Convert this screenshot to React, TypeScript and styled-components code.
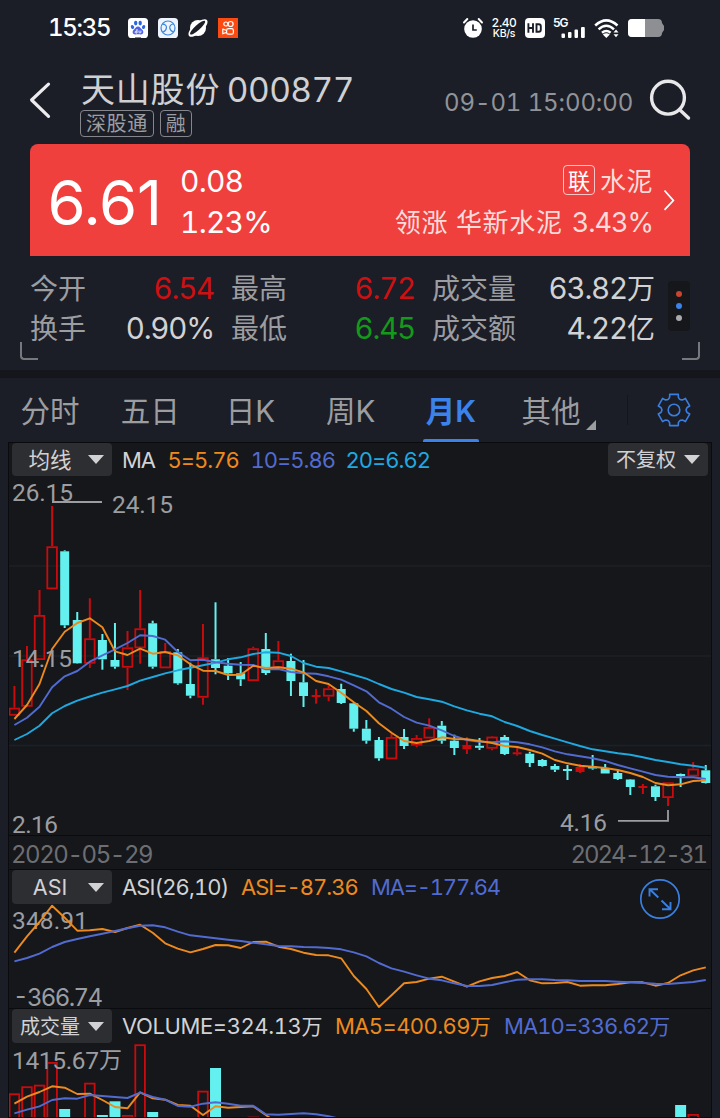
import React from "react";
import styled, { createGlobalStyle } from "styled-components";

const C = {
  page: "#1b1e27",
  panel: "#15171b",
  line: "#0a0b0e",
  up: "#c90b0e",
  down: "#63f0ee",
  orange: "#ee8a1d",
  indigo: "#526bd0",
  sky: "#1fa9e0",
  blue: "#3a7fe0",
  text: "#d2d2d4",
  muted: "#9c9da1",
  dim: "#6d6e72",
};

const FONT = 'Inter, "Noto Sans CJK SC", sans-serif';
const AXIS_FONT = 'Roboto, "Noto Sans CJK SC", sans-serif';

const Global = createGlobalStyle`
  * { box-sizing: border-box; }
  body { margin: 0; background: ${C.page}; font-family: ${FONT}; font-variant-numeric: tabular-nums; overflow: hidden; }
  svg { display: block; flex: none; overflow: visible; }
`;

const Screen = styled.div`
  width: 720px;
  height: 1118px;
  overflow: hidden;
  display: flex;
  flex-direction: column;
  background: ${C.page};
  color: ${C.text};
  white-space: nowrap;
`;

const Cjk = styled.span<{ $size: number; $gap?: number }>`
  font-size: ${(p) => p.$size}px;
  letter-spacing: ${(p) => p.$gap ?? 0}px;
`;

/* ---------- status bar ---------- */

const StatusBar = styled.div`
  height: 56px;
  flex: none;
  display: flex;
  align-items: center;
  padding: 0 56px 0 48px;
  justify-content: space-between;
`;
const StatusGroup = styled.div<{ $gap: number }>`
  display: flex;
  align-items: center;
  gap: ${(p) => p.$gap}px;
`;
const Clock = styled.span`
  font-size: 24px;
  font-weight: 500;
  color: #fff;
  letter-spacing: -1.3px;
  width: 70px;
  line-height: 32px;
`;
const NetSpeed = styled.div`
  display: flex;
  flex-direction: column;
  align-items: center;
  color: #fff;
  font-weight: 500;
  font-size: 12px;
  line-height: 11px;
  letter-spacing: -0.4px;
  width: 26px;
`;
const SpeedUnit = styled.span`
  font-size: 10.5px;
  letter-spacing: -0.3px;
`;

/* ---------- header ---------- */

const Header = styled.header`
  height: 88px;
  flex: none;
  display: flex;
  padding: 0 29px 0 29px;
`;
const BackSlot = styled.div`
  width: 51px;
  padding-top: 25px;
`;
const Identity = styled.div`
  flex: 1;
  display: flex;
  flex-direction: column;
`;
const TitleRow = styled.div`
  height: 54px;
  padding: 13px 0 0 1px;
  line-height: 41px;
  font-size: 33.5px;
  color: #d0d0d2;
`;
const StockCode = styled.span`
  margin-left: 6.5px;
  letter-spacing: -0.5px;
`;
const TagRow = styled.div`
  display: flex;
  gap: 6px;
`;
const Tag = styled.span`
  height: 27px;
  padding: 0 5px;
  border: 1px solid #85868b;
  border-radius: 4px;
  color: ${C.muted};
  font-size: 20px;
  line-height: 27px;
  letter-spacing: 0.6px;
`;
const DateTime = styled.span`
  width: 205px;
  padding-top: 32px;
  font-size: 24px;
  line-height: 30px;
  letter-spacing: -0.1px;
  color: #929398;
`;
const SearchSlot = styled.div`
  padding-top: 23px;
`;

/* ---------- quote card ---------- */

const Card = styled.section`
  margin: 0 30px;
  height: 112px;
  flex: none;
  display: flex;
  background: #ef403e;
  border-radius: 8px 8px 0 0;
  color: #fff;
`;
const Price = styled.div`
  width: 150px;
  padding: 23px 0 0 17.5px;
  font-size: 61.5px;
  line-height: 72px;
  letter-spacing: -0.3px;
  font-variant-numeric: proportional-nums;
`;
const Change = styled.div`
  flex: 1;
  padding-top: 17px;
  font-size: 30px;
  line-height: 41px;
  letter-spacing: -0.8px;
`;
const Sector = styled.div`
  display: flex;
  flex-direction: column;
  align-items: flex-end;
  padding-top: 17px;
  color: #fcdcdb;
`;
const SectorLine = styled.div<{ $gap: number }>`
  height: 41px;
  line-height: 41px;
  display: flex;
  align-items: center;
  gap: ${(p) => p.$gap}px;
`;
const SectorGain = styled.span`
  font-size: 27px;
  letter-spacing: -1px;
`;
const Badge = styled.span`
  width: 32px;
  height: 30px;
  margin-bottom: 3px;
  border: 1px solid #fbc6c5;
  border-radius: 4px;
  text-align: center;
  line-height: 30px;
  font-size: 22px;
  color: #fff;
`;
const ChevronSlot = styled.div`
  width: 37px;
  padding: 45px 0 0 9px;
`;

/* ---------- stats ---------- */

const Stats = styled.section`
  position: relative;
  height: 114px;
  flex: none;
  display: flex;
  padding: 12px 30px 0 30px;
  justify-content: space-between;
`;
const StatGrid = styled.div`
  display: grid;
  grid-template-columns: 56px 128px 73px 128px 101px 139px;
  grid-auto-rows: 40px;
  line-height: 42px;
`;
const StatLabel = styled.span<{ $indent?: number }>`
  font-size: 28px;
  color: ${C.muted};
  padding-left: ${(p) => p.$indent ?? 0}px;
`;
const StatValue = styled.span<{ $color?: string }>`
  font-size: 29.5px;
  line-height: 41px;
  text-align: right;
  letter-spacing: -1.2px;
  color: ${(p) => p.$color ?? C.text};
`;
const DotMenu = styled.div`
  width: 22px;
  height: 50px;
  margin-top: 13px;
  border-radius: 4px;
  background: #15171b;
  display: flex;
  flex-direction: column;
  align-items: center;
  justify-content: center;
  gap: 6px;
`;
const Dot = styled.i<{ $color: string }>`
  width: 6px;
  height: 6px;
  border-radius: 50%;
  background: ${(p) => p.$color};
`;
const Corner = styled.i<{ $side: "left" | "right" }>`
  position: absolute;
  bottom: 10px;
  ${(p) => p.$side}: 20px;
  width: 18px;
  height: 18px;
  border: 0 solid #77787d;
  border-bottom-width: 2px;
  border-${(p) => p.$side}-width: 2px;
  border-bottom-${(p) => p.$side}-radius: 4px;
`;
const Divider = styled.div`
  height: 8px;
  flex: none;
  background: #15161b;
`;

/* ---------- tabs ---------- */

const Tabs = styled.nav`
  height: 64px;
  flex: none;
  display: flex;
`;
const Tab = styled.div<{ $active?: boolean }>`
  width: 100.2px;
  height: 64px;
  display: flex;
  flex-direction: column;
  align-items: center;
  font-size: 29.5px;
  line-height: 66px;
  font-weight: ${(p) => (p.$active ? 600 : 400)};
  color: ${(p) => (p.$active ? "#3b82ea" : C.muted)};
`;
const TabText = styled.span`
  height: 61px;
  display: block;
`;
const Underline = styled.i`
  width: 56px;
  height: 3px;
  border-radius: 2px 2px 0 0;
  background: #3b82ea;
`;
const MoreMark = styled.i`
  width: 0;
  height: 0;
  margin: 42px 0 0 -15px;
  border-bottom: 10px solid ${C.muted};
  border-left: 10px solid transparent;
`;
const TabRule = styled.i`
  width: 1px;
  height: 30px;
  margin: 17px 29px 0 30.8px;
  background: #14161c;
`;
const GearSlot = styled.div`
  padding-top: 15px;
`;

/* ---------- chart panels ---------- */

const Panels = styled.main`
  margin: 0 8px;
  flex: 1;
  border: 1px solid ${C.line};
  background: ${C.panel};
  display: flex;
  flex-direction: column;
  overflow: hidden;
`;
const Panel = styled.section<{ $height: number }>`
  position: relative;
  height: ${(p) => p.$height}px;
  flex: none;
  border-bottom: 1px solid ${C.line};
`;
const PanelHead = styled.div<{ $height?: number }>`
  height: ${(p) => p.$height ?? 34}px;
  flex: none;
  padding: 0 3px;
  display: flex;
`;
const Picker = styled.div`
  width: 100px;
  height: 100%;
  flex: none;
  display: flex;
  align-items: center;
  border-radius: 4px;
  background: #2d2e32;
`;
const PickerText = styled.span`
  width: 76px;
  text-align: center;
  font-size: 21.5px;
  line-height: 34px;
`;
const Caret = styled.i`
  width: 0;
  height: 0;
  border: 8px solid transparent;
  border-top: 9px solid ${C.text};
  border-bottom: 0;
`;
const Legend = styled.div`
  flex: 1;
  display: flex;
  padding-left: 10px;
  font-size: 22px;
  line-height: 34px;
`;
const LegendItem = styled.span<{ $w: number; $color?: string; $ls?: number }>`
  width: ${(p) => p.$w}px;
  flex: none;
  letter-spacing: ${(p) => p.$ls ?? -1}px;
  color: ${(p) => p.$color ?? C.text};
`;
const DateRow = styled.div`
  height: 34px;
  flex: none;
  display: flex;
  justify-content: space-between;
  padding: 0 5px 0 2px;
  border-bottom: 1px solid ${C.line};
  color: ${C.dim};
  font-size: 24px;
  line-height: 38px;
`;
const DateLabel = styled.span<{ $ls: number }>`
  letter-spacing: ${(p) => p.$ls}px;
`;
const ExpandButton = styled.div`
  position: absolute;
  top: 8px;
  right: 30px;
`;

/* ---------- data, in chart pixels ---------- */

type Candle = [up: 0 | 1, high: number, top: number, bottom: number, low: number];

const candles: Candle[] = [
  [1, 686, 707.7, 715.7, 715.7], [1, 646, 659.3, 706.7, 706.7], [1, 590, 615, 660, 660],
  [1, 506, 546.3, 589.3, 589.3], [0, 550.3, 551.3, 625.3, 628], [0, 612, 620, 663.3, 663.7],
  [1, 598.3, 638.3, 663.7, 668], [0, 634, 640, 659.3, 669.7], [0, 623, 660, 666.7, 668.7],
  [1, 631, 647.3, 667.7, 690], [1, 590, 628.3, 648.3, 663.7], [0, 620.7, 623.3, 666.7, 668.7],
  [1, 643, 651, 668.3, 668.3], [0, 649, 652.3, 683.3, 684.7], [0, 662.7, 684, 695.7, 698.3],
  [1, 624, 657.3, 697.7, 704.7], [0, 602.3, 659.3, 668, 674.3], [0, 658, 665.7, 673.3, 680],
  [0, 662, 673.3, 679.3, 686], [1, 646.7, 648.3, 681, 681], [0, 633, 649, 673, 675],
  [1, 641, 660.3, 668, 668], [0, 653.7, 661, 681, 696], [0, 660, 682.3, 696, 707],
  [1, 689, 695, 697, 703.7], [1, 685.3, 688.3, 696.6, 701.3], [0, 683.7, 689, 703, 704],
  [0, 702.7, 703.3, 728.7, 731.7], [0, 720, 728.7, 740.7, 743.7], [0, 737, 740, 758.3, 760.7],
  [1, 734, 737, 759.3, 759.3], [0, 729, 737, 746, 749], [1, 735, 738, 745.6, 747.3],
  [1, 718.3, 727, 738.5, 738.5], [0, 721, 725.7, 740.7, 743.7], [0, 734.7, 740.7, 748, 755],
  [1, 737, 745, 749.3, 754], [0, 738, 745.8, 747.8, 750], [1, 736, 736.6, 748.7, 750.3],
  [0, 735, 737, 754, 755], [1, 747, 752.3, 754.3, 755.7], [0, 751.7, 753.7, 763, 767],
  [0, 759, 760, 766, 766.7], [0, 764, 766, 769.7, 772], [0, 765, 769, 771, 780],
  [1, 764, 767, 772, 773], [0, 755, 766.5, 768.5, 769.7], [0, 764, 768, 773.5, 773.5],
  [0, 770.7, 773, 779, 780], [0, 779, 779.5, 787, 795], [1, 784, 786, 788, 794],
  [0, 784.7, 786.3, 797, 801], [1, 782.3, 782.3, 798, 806], [0, 773.5, 774, 776, 787],
  [1, 762, 768.6, 776.5, 776.5], [0, 765, 770.3, 783, 783.5],
];

const ma5 = [719, 705, 684, 649, 631.7, 623, 618.3, 627.3, 651.3, 655, 648.7, 653.7, 652, 655.3, 664.3, 670.7, 671, 675, 674.7, 665.7, 668, 667.3, 668.7, 672.3, 681, 684, 692.7, 702.3, 711, 723.3, 732.7, 741, 743, 741, 737.3, 739, 739.3, 741, 743, 746, 747, 750, 753.7, 760, 763.3, 765.7, 766.7, 768, 770, 773, 777, 783, 785.3, 784.3, 781, 780.3];
const ma10 = [725, 717.7, 706.7, 687.3, 676.3, 671, 661.7, 655.3, 649.3, 643, 635.3, 636, 639.7, 652, 660.3, 659.7, 662.3, 663.7, 664.7, 665, 669.3, 669, 672, 673.3, 673.7, 676.3, 679.7, 685.3, 691.3, 702.3, 708.7, 717, 722.7, 725.7, 730.3, 736, 740, 741.7, 742.3, 741.3, 742.3, 744.3, 747.3, 751.3, 754.3, 756.3, 758.3, 761, 765, 768.3, 771.7, 775, 776.7, 777.3, 777.3, 779];
const ma20 = [740, 734, 725.7, 713.3, 706, 700.7, 696.5, 692.7, 689.3, 686, 680.7, 677, 673.3, 670.3, 667.7, 665.3, 662.7, 659.3, 657.3, 654, 652.3, 652.7, 656, 663, 666.7, 668, 671.3, 675, 678.7, 684, 689, 692.7, 697, 699.3, 701.7, 706.3, 710.3, 713.7, 716.3, 722, 726, 731, 735, 738.7, 742.3, 746, 749.3, 751.3, 753.3, 754.7, 757.3, 760, 762, 764.3, 765.7, 767.7];
const asi = [952.7, 936.3, 922, 905.7, 917.7, 930.7, 930.3, 929, 932, 928, 924.7, 932.7, 943.3, 948.7, 952.3, 949, 945, 945.3, 948, 942, 941.7, 946.7, 949, 952.7, 955, 955.3, 958.3, 976, 989, 1007, 995.3, 983.3, 982, 978.7, 976.7, 981.7, 986.7, 981.3, 978, 976, 972, 980.3, 983.3, 983, 982, 985.7, 985.3, 985.3, 984, 982.3, 982.3, 985.7, 983, 975.3, 970.3, 967.3];
const asiMa = [961.3, 958, 953.7, 947, 942, 939, 936.3, 933.7, 931, 928.3, 925.7, 925.3, 927.3, 931.7, 935.3, 936.7, 938.3, 939.7, 941, 942.7, 944.3, 946, 946.3, 947, 947.3, 948, 949.3, 952.3, 956.3, 963, 968.3, 971.7, 975.3, 978.7, 980.3, 983.3, 986, 986, 985, 982.3, 979.7, 979.3, 979.3, 980, 980.3, 981, 981, 981, 981.7, 982.3, 983, 983.7, 984, 983, 982, 980];
const volMa5 = [1103.7, 1096.7, 1092, 1086.3, 1087.7, 1094, 1093.7, 1100, 1107, 1108.3, 1092.3, 1098.3, 1099.7, 1105, 1105.7, 1115, 1106.3, 1107.7, 1107, 1106.3, 1115, 1124];
const volMa10 = [1113.3, 1109.7, 1106.3, 1100, 1098.3, 1098.7, 1095, 1096, 1097, 1098, 1092.7, 1097, 1099.7, 1106, 1106.7, 1103.7, 1102.3, 1103.7, 1105.7, 1105.7, 1114.3, 1114.7, 1114, 1113.3, 1114.3, 1116.3, 1119];
const volumes: [index: number, up: 0 | 1, top: number][] = [
  [0, 1, 1093.3], [1, 1, 1086.3], [2, 1, 1084.7], [3, 1, 1062], [4, 0, 1109], [6, 1, 1082.7],
  [7, 0, 1115], [8, 0, 1101.3], [9, 1, 1115], [10, 1, 1044.3], [11, 0, 1112], [15, 1, 1090.7],
  [16, 0, 1068], [19, 1, 1116.6], [23, 0, 1117], [53, 0, 1105], [54, 1, 1114],
];

const xAt = (i: number) => 14.4 + i * 12.57;

const Line = ({ data, color }: { data: number[]; color: string }) => (
  <polyline
    fill="none"
    stroke={color}
    strokeWidth={1.9}
    strokeLinejoin="round"
    points={data.map((y, i) => `${xAt(i).toFixed(1)},${y}`).join(" ")}
  />
);

const Label = ({ x, y, w, children, font = AXIS_FONT, size = 24.5 }: { x: number; y: number; w: number; children: string; font?: string; size?: number }) => (
  <text x={x} y={y} fill={C.muted} fontSize={size} fontFamily={font} textLength={w} lengthAdjust="spacing">
    {children}
  </text>
);

const CandleMark = ({ c, i }: { c: Candle; i: number }) => {
  const [up, high, top, bottom, low] = c;
  const x = xAt(i);
  const color = up ? C.up : C.down;
  const hollow = up && bottom - top > 5;
  return (
    <g>
      {high < top && <line x1={x} x2={x} y1={high} y2={top} stroke={color} strokeWidth={2} />}
      {low > bottom && <line x1={x} x2={x} y1={bottom} y2={low} stroke={color} strokeWidth={2} />}
      {hollow ? (
        <rect x={x - 4.8} y={top + 0.9} width={9.6} height={bottom - top - 1.8} fill="none" stroke={color} strokeWidth={1.8} />
      ) : (
        <rect x={x - 4.5} y={top} width={9} height={bottom - top} fill={color} />
      )}
    </g>
  );
};

const PriceChart = () => (
  <svg width="702" height="359" viewBox="9 476 702 359">
    {[566, 656, 745.5].map((y) => (
      <line key={y} x1={9} x2={711} y1={y} y2={y} stroke="#1e2025" strokeWidth={1.5} />
    ))}
    {candles.map((c, i) => (
      <CandleMark key={i} c={c} i={i} />
    ))}
    <Line data={ma20} color={C.sky} />
    <Line data={ma10} color={C.indigo} />
    <Line data={ma5} color={C.orange} />
    <path d="M52 502H102M618 820.8H668V810" fill="none" stroke={C.muted} strokeWidth={1.8} />
    <Label x={12} y={501} w={61}>26.15</Label>
    <Label x={112} y={513} w={61}>24.15</Label>
    <Label x={12} y={667} w={60}>14.15</Label>
    <Label x={12} y={833} w={46}>2.16</Label>
    <Label x={560} y={831} w={47}>4.16</Label>
  </svg>
);

const AsiChart = () => (
  <svg width="702" height="104" viewBox="9 904 702 104">
    <Label x={12} y={929} w={76}>348.91</Label>
    <Label x={13} y={1006} w={90} font={FONT} size={24}>-366.74</Label>
    <Line data={asi} color={C.orange} />
    <Line data={asiMa} color={C.indigo} />
  </svg>
);

const VolumeChart = () => (
  <svg width="702" height="74" viewBox="9 1043 702 74">
    {volumes.map(([i, up, top]) =>
      up ? (
        <rect key={i} x={xAt(i) - 4.8} y={top + 0.9} width={9.6} height={90} fill="none" stroke={C.up} strokeWidth={1.8} />
      ) : (
        <rect key={i} x={xAt(i) - 5.5} y={top} width={11} height={90} fill={C.down} />
      )
    )}
    <Label x={12} y={1069} w={87}>1415.67</Label>
    <text x={99} y={1068} fill={C.muted} fontSize={23} fontFamily={FONT}>万</text>
    <Line data={volMa5} color={C.orange} />
    <Line data={volMa10} color={C.indigo} />
  </svg>
);

/* ---------- icons ---------- */

const gearPath = (() => {
  const pts: string[] = [];
  for (let k = 0; k < 6; k++) {
    for (const [da, r] of [[-27, 12.2], [-19, 13.4], [-15.5, 16.2], [15.5, 16.2], [19, 13.4], [27, 12.2]]) {
      const a = ((k * 60 - 90 + da) * Math.PI) / 180;
      pts.push(`${(17 + r * Math.cos(a)).toFixed(2)} ${(17 + r * Math.sin(a)).toFixed(2)}`);
    }
  }
  return `M${pts.join("L")}Z`;
})();

const GearIcon = () => (
  <svg width="34" height="34" viewBox="0 0 34 34" fill="none" stroke={C.blue} strokeWidth="1.6" strokeLinejoin="round">
    <path d={gearPath} />
    <circle cx="17" cy="17" r="5.8" />
  </svg>
);

const BackIcon = () => (
  <svg width="24" height="38" viewBox="0 0 24 38" fill="none" stroke="#ececee" strokeWidth="3.2" strokeLinecap="round">
    <path d="M19.5 3.2 2.6 19 19.5 35.4" strokeLinejoin="round" />
  </svg>
);

const SearchIcon = () => (
  <svg width="42" height="42" viewBox="0 0 42 42" fill="none" stroke="#e8e8ea" strokeWidth="3.4" strokeLinecap="round">
    <circle cx="19" cy="18.7" r="16.4" />
    <path d="M31 31l8.5 8" />
  </svg>
);

const PawIcon = () => (
  <svg width="20" height="20" viewBox="0 0 20 20">
    <rect width="20" height="20" rx="3.6" fill="#fff" />
    <g fill="#2a66dd">
      <ellipse cx="7.7" cy="5.1" rx="1.7" ry="2.3" />
      <ellipse cx="12.2" cy="5.1" rx="1.7" ry="2.3" />
      <ellipse cx="4.5" cy="9" rx="1.6" ry="2.1" transform="rotate(-20 4.5 9)" />
      <ellipse cx="15.6" cy="9" rx="1.6" ry="2.1" transform="rotate(20 15.6 9)" />
    </g>
    <path d="M10 8.4c2 0 2.4 1.7 4 3.2 2.5 2.2 1.2 5-1.3 4.9-1-.1-1.7-.2-2.7-.2s-1.7.1-2.7.2c-2.5.1-3.8-2.7-1.3-4.9C7.6 10.1 8 8.4 10 8.4z" fill="#5061e8" />
    <path d="M9 11v4H7.6a1.1 1.1 0 1 1 1.4-1.7M11 12.6v1.7c0 .9 1.9.9 1.9 0v-1.7" fill="none" stroke="#fff" strokeWidth=".9" />
    <path d="M7 20h3v-.8H7z" fill="#d33" />
    <path d="M10 20h3v-.8h-3z" fill="#2a66dd" />
  </svg>
);

const RingIcon = () => (
  <svg width="20" height="20" viewBox="0 0 20 20" fill="none" stroke="#3b86dc" strokeWidth="1.2">
    <rect width="20" height="20" rx="3.6" fill="#eef4fd" stroke="none" />
    <circle cx="10" cy="10" r="7" />
    <path d="M4.5 6.2C7.5 6.2 8.8 8 8.4 10.200S6.500 13.600 5 14M15.600 6C12.800 6.200 11.400 8 11.800 10.200S13.800 13.600 15.600 14" />
  </svg>
);

const OrbitIcon = () => (
  <svg width="20" height="20" viewBox="0 0 20 20">
    <circle cx="10" cy="10" r="8" fill="#fff" />
    <ellipse cx="10" cy="10" rx="12" ry="5" transform="rotate(-42 10 10)" fill="#fff" />
    <ellipse cx="9.6" cy="9.6" rx="10" ry="2.5" transform="rotate(-42 9.6 9.6)" fill={C.page} />
  </svg>
);

const CameraIcon = () => (
  <svg width="20" height="20" viewBox="0 0 20 20" fill="none" stroke="#fff" strokeWidth="1.2">
    <rect width="20" height="20" fill="#fb4b12" stroke="none" />
    <circle cx="7.8" cy="6" r="2" />
    <circle cx="12.6" cy="6" r="2.5" />
    <rect x="8.6" y="10.6" width="6.8" height="5.6" rx="1.8" />
    <path d="M8.6 12.4 4.8 11V15.800L8.600 14.400" strokeLinejoin="round" />
  </svg>
);

const AlarmIcon = () => (
  <svg width="20" height="20" viewBox="0 0 20 20">
    <circle cx="10" cy="11" r="8.8" fill="#fff" />
    <path d="M1 4.5 4.3 1M19 4.5 15.7 1" stroke="#fff" strokeWidth="2" strokeLinecap="round" />
    <path d="M10 6.5V12h3.8" fill="none" stroke={C.page} strokeWidth="1.7" />
  </svg>
);

const HdIcon = () => (
  <svg width="20" height="20" viewBox="0 0 20 20" fill="none" stroke={C.page} strokeWidth="1.9">
    <rect width="20" height="20" rx="4" fill="#fff" stroke="none" />
    <path d="M3.4 5.3v9.4M8 5.3v9.4M3.4 10H8M11.5 6.2v7.6h2.3q2 0 2-2V8.2q0-2-2-2z" />
  </svg>
);

const SignalIcon = () => (
  <svg width="33" height="20" viewBox="0 0 33 20" fill="#fff">
    <text x="0" y="9.2" fontSize="12" fontWeight="600" fontFamily={FONT} textLength="15.5">5G</text>
    <rect x="8.5" y="15.5" width="3.5" height="4.5" rx="1" />
    <rect x="15" y="14" width="3.5" height="6" rx="1" />
    <rect x="21.5" y="11.5" width="3.5" height="8.5" rx="1" />
    <rect x="28" y="9" width="3.8" height="11" rx="1" />
  </svg>
);

const WifiIcon = () => (
  <svg width="26" height="20" viewBox="0 0 26 20" fill="none" stroke="#fff" strokeWidth="2.5">
    <path d="M1.2 7.5Q12.3-2.8 23.5 7.5M4.6 11.3q7.7-7 15.4 0M8 14.8q4.3-3.6 8.6 0" />
    <path d="M12.3 20 8.8 16.6q3.5-2.5 7 0z" fill="#fff" stroke="none" />
    <path d="M19.5 14.5 22 11.5l2.5 3zM19.5 16.3 22 19.3l2.5-3z" fill="#fff" stroke="none" />
  </svg>
);

const BatteryIcon = () => (
  <svg width="36" height="18" viewBox="0 0 36 18">
    <path d="M4 0h26q4 0 4 4l2 3v4l-2 3q0 4-4 4H4q-4 0-4-4V4q0-4 4-4z" fill="#8e8f93" />
    <path d="M17 0H4Q0 0 0 4v10q0 4 4 4h13z" fill="#fff" />
  </svg>
);

const ChevronIcon = () => (
  <svg width="14" height="24" viewBox="0 0 14 24" fill="none" stroke="#fff" strokeWidth="1.8">
    <path d="M2.5 1.5 11.3 11.5 2.5 20.8" />
  </svg>
);

const ExpandIcon = () => (
  <svg width="42" height="42" viewBox="0 0 42 42" fill="none" stroke={C.blue} strokeWidth="1.9">
    <circle cx="21" cy="21" r="19.2" strokeWidth="1.7" />
    <path d="M10.5 18.5V11.2H19M11 11.5l8.3 8M31.5 24v7.3H23M22.5 22.5l8.5 8.3" />
  </svg>
);

/* ---------- page ---------- */

export default function App() {
  return (
    <Screen>
      <Global />
      <StatusBar>
        <StatusGroup $gap={10}>
          <Clock>15:35</Clock>
          <PawIcon />
          <RingIcon />
          <OrbitIcon />
          <CameraIcon />
        </StatusGroup>
        <StatusGroup $gap={8}>
          <AlarmIcon />
          <NetSpeed>
            <span>2.40</span>
            <SpeedUnit>KB/s</SpeedUnit>
          </NetSpeed>
          <HdIcon />
          <SignalIcon />
          <WifiIcon />
          <BatteryIcon />
        </StatusGroup>
      </StatusBar>

      <Header>
        <BackSlot>
          <BackIcon />
        </BackSlot>
        <Identity>
          <TitleRow>
            <Cjk $size={34} $gap={0.8}>天山股份</Cjk>
            <StockCode>000877</StockCode>
          </TitleRow>
          <TagRow>
            <Tag>深股通</Tag>
            <Tag>融</Tag>
          </TagRow>
        </Identity>
        <DateTime>09-01 15:00:00</DateTime>
        <SearchSlot>
          <SearchIcon />
        </SearchSlot>
      </Header>

      <Card>
        <Price>6.61</Price>
        <Change>
          <div>0.08</div>
          <div>1.23%</div>
        </Change>
        <Sector>
          <SectorLine $gap={5}>
            <Badge>联</Badge>
            <Cjk $size={26} $gap={0.5}>水泥</Cjk>
          </SectorLine>
          <SectorLine $gap={9}>
            <Cjk $size={26} $gap={0.7}>领涨 华新水泥</Cjk>
            <SectorGain>3.43%</SectorGain>
          </SectorLine>
        </Sector>
        <ChevronSlot>
          <ChevronIcon />
        </ChevronSlot>
      </Card>

      <Stats>
        <StatGrid>
          <StatLabel>今开</StatLabel>
          <StatValue $color="#cf1013">6.54</StatValue>
          <StatLabel $indent={17}>最高</StatLabel>
          <StatValue $color="#cf1013">6.72</StatValue>
          <StatLabel $indent={17}>成交量</StatLabel>
          <StatValue>63.82<Cjk $size={28}>万</Cjk></StatValue>
          <StatLabel>换手</StatLabel>
          <StatValue>0.90%</StatValue>
          <StatLabel $indent={17}>最低</StatLabel>
          <StatValue $color="#149a1b">6.45</StatValue>
          <StatLabel $indent={17}>成交额</StatLabel>
          <StatValue>4.22<Cjk $size={28}>亿</Cjk></StatValue>
        </StatGrid>
        <DotMenu>
          <Dot $color="#c8452f" />
          <Dot $color="#3b82ea" />
          <Dot $color="#a9aaad" />
        </DotMenu>
        <Corner $side="left" />
        <Corner $side="right" />
      </Stats>
      <Divider />

      <Tabs>
        <Tab><TabText>分时</TabText></Tab>
        <Tab><TabText>五日</TabText></Tab>
        <Tab><TabText>日K</TabText></Tab>
        <Tab><TabText>周K</TabText></Tab>
        <Tab $active>
          <TabText>月K</TabText>
          <Underline />
        </Tab>
        <Tab><TabText>其他</TabText></Tab>
        <MoreMark />
        <TabRule />
        <GearSlot>
          <GearIcon />
        </GearSlot>
      </Tabs>

      <Panels>
        <Panel $height={393}>
          <PanelHead $height={33}>
            <Picker><PickerText>均线</PickerText><Caret /></Picker>
            <Legend>
              <LegendItem $w={45.5}>MA</LegendItem>
              <LegendItem $w={83} $color={C.orange}>5=5.76</LegendItem>
              <LegendItem $w={95} $color={C.indigo}>10=5.86</LegendItem>
              <LegendItem $w={90} $color={C.sky}>20=6.62</LegendItem>
            </Legend>
            <Picker><PickerText><Cjk $size={20}>不复权</Cjk></PickerText><Caret /></Picker>
          </PanelHead>
          <PriceChart />
        </Panel>
        <DateRow>
          <DateLabel $ls={-1.45}>2020-05-29</DateLabel>
          <DateLabel $ls={-2}>2024-12-31</DateLabel>
        </DateRow>
        <Panel $height={139}>
          <PanelHead>
            <Picker><PickerText>ASI</PickerText><Caret /></Picker>
            <Legend>
              <LegendItem $w={119} $ls={-0.9}>ASI(26,10)</LegendItem>
              <LegendItem $w={130} $color={C.orange}>ASI=-87.36</LegendItem>
              <LegendItem $w={140} $ls={-1.2} $color={C.indigo}>MA=-177.64</LegendItem>
            </Legend>
          </PanelHead>
          <AsiChart />
          <ExpandButton>
            <ExpandIcon />
          </ExpandButton>
        </Panel>
        <PanelHead>
          <Picker><PickerText><Cjk $size={20}>成交量</Cjk></PickerText><Caret /></Picker>
          <Legend>
            <LegendItem $w={213} $ls={-0.4}>VOLUME=324.13<Cjk $size={21}>万</Cjk></LegendItem>
            <LegendItem $w={169} $ls={-0.6} $color={C.orange}>MA5=400.69<Cjk $size={21}>万</Cjk></LegendItem>
            <LegendItem $w={180} $ls={-0.9} $color={C.indigo}>MA10=336.62<Cjk $size={21}>万</Cjk></LegendItem>
          </Legend>
        </PanelHead>
        <VolumeChart />
      </Panels>
    </Screen>
  );
}
